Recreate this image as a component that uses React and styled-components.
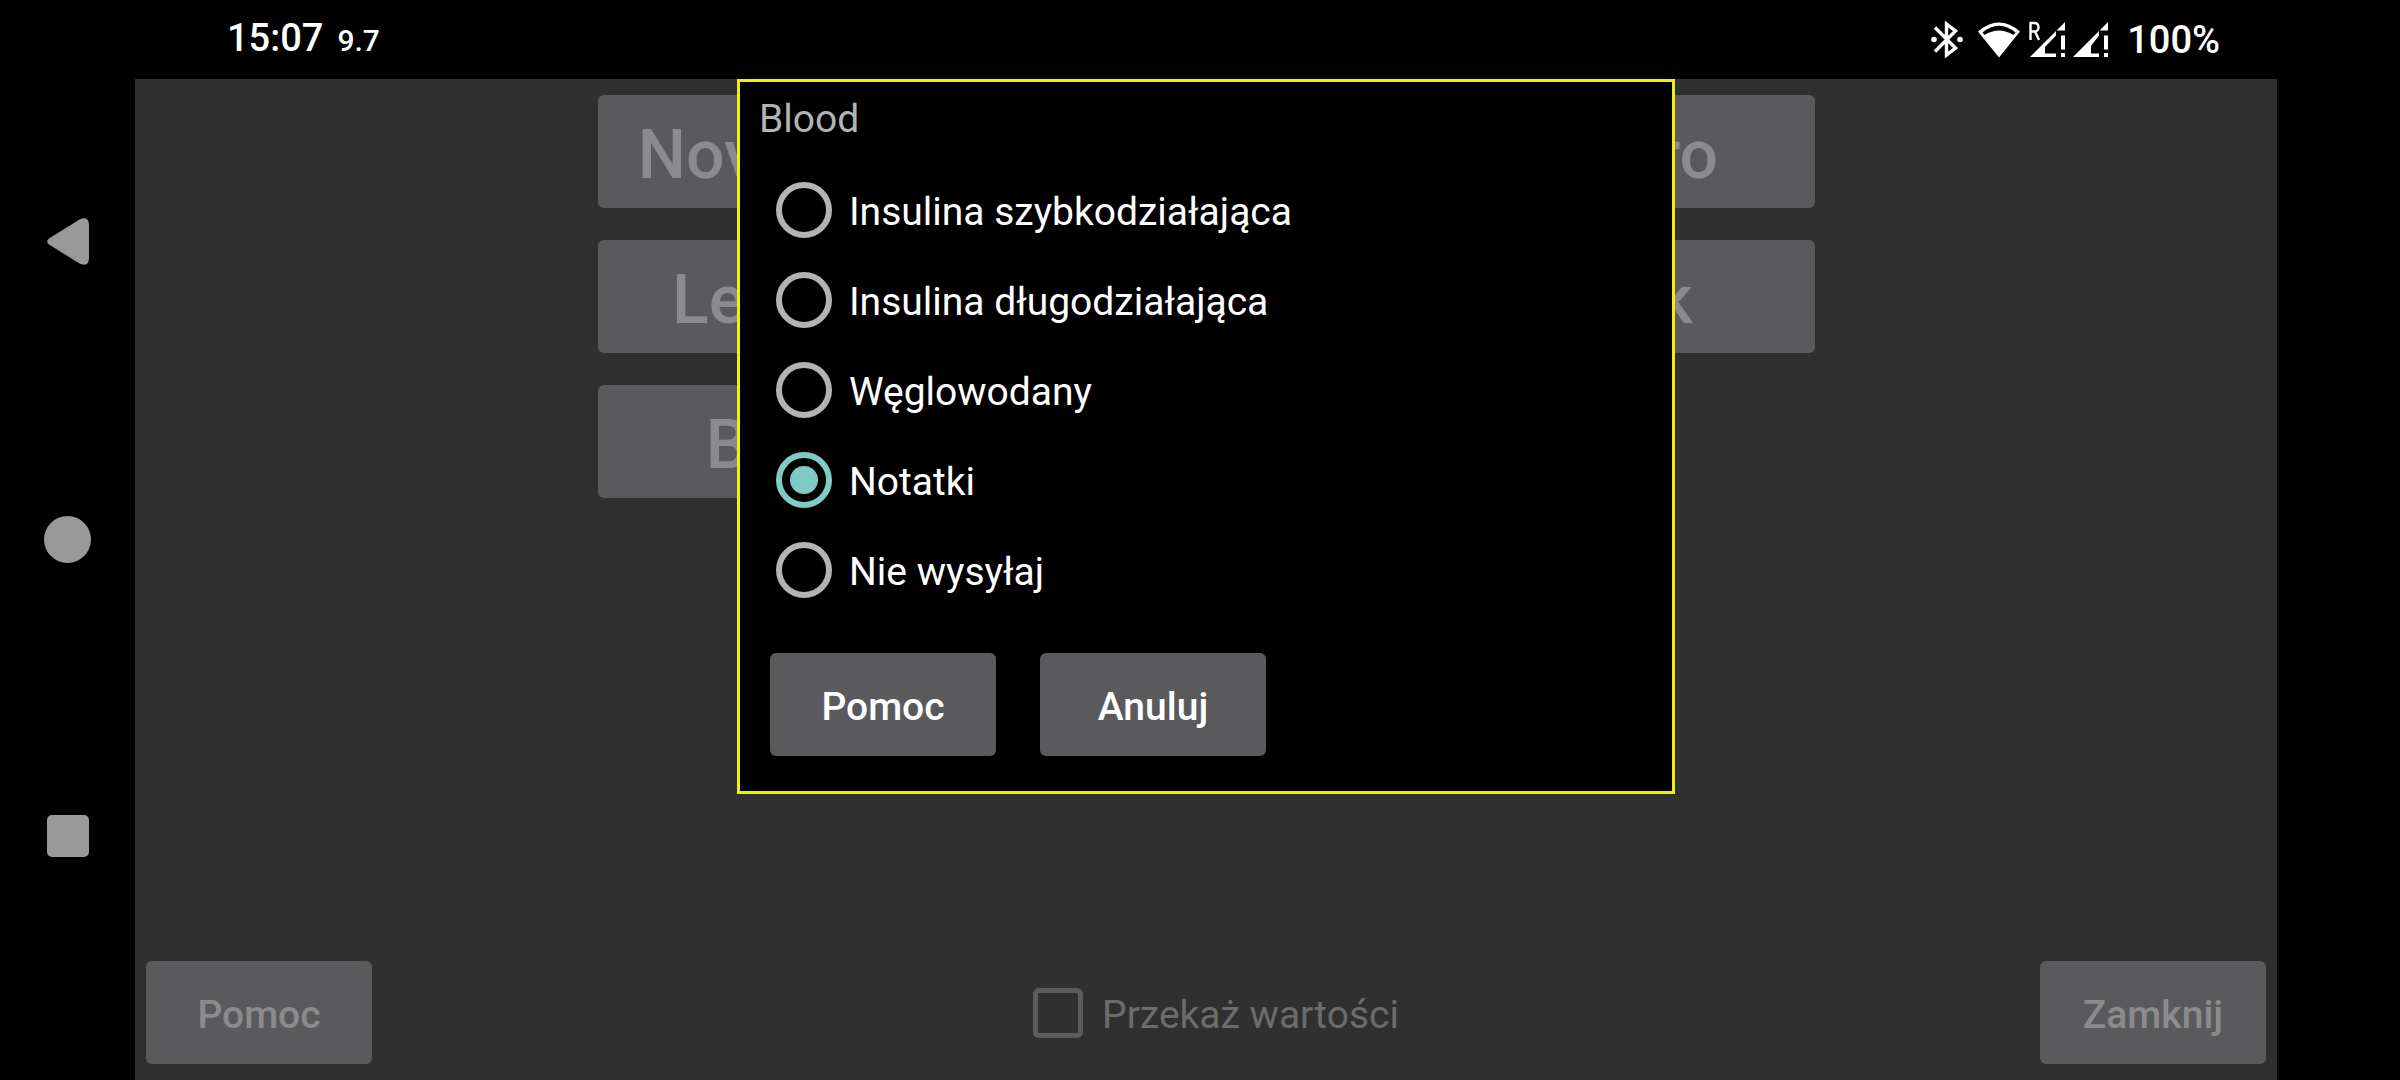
import React, { useState } from "react";
import styled, { createGlobalStyle } from "styled-components";

const Global = createGlobalStyle`
  *, *::before, *::after { box-sizing: border-box; }
  html, body, #root { height: 100%; }
  body {
    margin: 0;
    background: #000;
    color: #fff;
    font-family: Roboto, "Noto Sans", sans-serif;
    font-size: 39px;
    line-height: 48px;
  }
  button, input { font: inherit; color: inherit; margin: 0; }
`;

const Screen = styled.div`
  min-height: 100%;
  display: grid;
  grid-template-rows: 79px 1fr;
`;

const StatusBar = styled.header`
  display: flex;
  align-items: center;
  justify-content: space-between;
  padding: 0 180px 0 227px;
  font-size: 38px;
  font-weight: 500;
`;

const Clock = styled.div`
  display: flex;
  align-items: baseline;
  gap: 14px;
`;

const Glucose = styled.span`
  font-size: 30px;
`;

const Indicators = styled.div`
  display: flex;
  align-items: center;
  gap: 6px;
`;

const Battery = styled.span`
  margin-left: 12px;
`;

const Body = styled.div`
  display: grid;
  grid-template-columns: 135px 1fr 123px;
`;

const NavBar = styled.nav`
  display: flex;
  flex-direction: column;
  justify-content: space-around;
  align-items: center;
  padding: 13px 0 97px;
`;

const NavButton = styled.button`
  display: flex;
  padding: 0;
  border: 0;
  background: none;
  svg { display: block; fill: #999; }
`;

const Main = styled.main`
  position: relative;
  display: flex;
  flex-direction: column;
  justify-content: space-between;
  align-items: center;
  padding: 16px 11px;
  background: #303030;
`;

const LabelGrid = styled.div`
  display: grid;
  grid-template-columns: 392px 369px 392px;
  gap: 32px;
`;

const Button = styled.button`
  min-width: 226px;
  height: 103px;
  padding: 5px 16px 0;
  border: 0;
  border-radius: 6px;
  background: #5a5a5c;
  color: ${(p) => (p.$dim ? "#8b8b8d" : "#fff")};
  font-weight: 500;
`;

const LabelButton = styled(Button)`
  grid-column: ${(p) => p.$column};
  height: 113px;
  padding-top: 6px;
  font-size: 68px;
  line-height: 80px;
`;

const Footer = styled.footer`
  align-self: stretch;
  display: flex;
  justify-content: space-between;
  align-items: center;
`;

const CheckLabel = styled.label`
  display: flex;
  align-items: center;
  gap: 19px;
  padding-left: 20px;
  color: #6c6c6c;
`;

const CheckBox = styled.input`
  appearance: none;
  width: 50px;
  height: 50px;
  border: 5px solid #5c5c5c;
  border-radius: 6px;
`;

const Dialog = styled.section`
  position: absolute;
  top: 0;
  left: 50%;
  width: 938px;
  transform: translateX(-50%);
  padding: 13px 30px 35px;
  border: 3px solid #eeee14;
  background: #000;
`;

const Title = styled.h1`
  margin: 0 0 22px -11px;
  color: #b3b3b3;
  font-size: 39px;
  font-weight: 400;
  line-height: 48px;
`;

const Options = styled.div`
  display: flex;
  flex-direction: column;
  padding-left: 6px;
`;

const Option = styled.label`
  display: flex;
  align-items: center;
  gap: 17px;
  height: 90px;
`;

const ControlText = styled.span`
  padding-top: 4px;
`;

const Radio = styled.input`
  appearance: none;
  display: grid;
  place-items: center;
  width: 56px;
  height: 56px;
  border: 6px solid #b3b3b3;
  border-radius: 50%;
  &:checked { border-color: #80cbc4; }
  &:checked::before {
    content: "";
    width: 28px;
    height: 28px;
    border-radius: 50%;
    background: #80cbc4;
  }
`;

const Actions = styled.div`
  display: flex;
  gap: 44px;
  margin-top: 38px;
`;

const BluetoothIcon = () => (
  <svg width="41" height="37" viewBox="0 0 41 37" aria-hidden="true">
    <path d="M4 6.500 L24.500 27 L15.500 34 V3 L24.500 10 L4 30.500" fill="none" stroke="#fff" strokeWidth="3.400" />
    <circle cx="3" cy="18.500" r="2.800" fill="#fff" />
    <circle cx="29" cy="18.500" r="2.800" fill="#fff" />
  </svg>
);

const WifiIcon = () => (
  <svg width="45" height="36" viewBox="0 0 45 36" aria-hidden="true">
    <path d="M0 9.500 Q21 -8.500 42 9.500 L21 35.500 Z" fill="#fff" />
    <path d="M4.500 10.500 Q21 -3 37.500 10.500 L35.500 13 Q21 4 6.500 13 Z" fill="#000" />
  </svg>
);

const SignalIcon = ({ roaming }) => (
  <svg width="37" height="37" viewBox="0 0 37 37" aria-hidden="true">
    <path
      d={
        (roaming ? "M1 36 L27 10 V14.500 L16 26 V32.500 H27 V36 Z" : "M1 36 L27 10 V14.500 L19 25 V32.500 H27 V36 Z") +
        " M36 1 V9.500 H27.500 Z M32 14.500 h4 v14 h-4 Z M32 32 h4 v4 h-4 Z"
      }
      fill="#fff"
    />
    {roaming && (
      <path d="M1.500 19 V2 H5.500 Q9.500 2 9.500 6.200 Q9.500 10.500 5.500 10.500 H1.500 M6 10.500 L10 19" fill="none" stroke="#fff" strokeWidth="2.400" />
    )}
  </svg>
);

const LABELS = [
  { name: "Novorapid", column: 1 },
  { name: "Dextro", column: 3 },
  { name: "Levemir", column: 1 },
  { name: "Walk", column: 3 },
  { name: "Blood", column: 1 },
];

const OPTIONS = [
  "Insulina szybkodziałająca",
  "Insulina długodziałająca",
  "Węglowodany",
  "Notatki",
  "Nie wysyłaj",
];

export default function App() {
  const [choice, setChoice] = useState("Notatki");
  return (
    <Screen>
      <Global />
      <StatusBar>
        <Clock>
          <span>15:07</span>
          <Glucose>9.7</Glucose>
        </Clock>
        <Indicators>
          <BluetoothIcon />
          <WifiIcon />
          <SignalIcon roaming />
          <SignalIcon />
          <Battery>100%</Battery>
        </Indicators>
      </StatusBar>
      <Body>
        <NavBar>
          <NavButton aria-label="Wstecz">
            <svg width="42" height="47" viewBox="0 0 42 47">
              <path d="M2 20.500 L33 1.200 Q42 -2 42 7 V40 Q42 49 33 45.800 L2 26.500 Q-1.500 23.500 2 20.500 Z" />
            </svg>
          </NavButton>
          <NavButton aria-label="Ekran główny">
            <svg width="47" height="47" viewBox="0 0 47 47"><circle cx="23.500" cy="23.500" r="23.500" /></svg>
          </NavButton>
          <NavButton aria-label="Ostatnie">
            <svg width="42" height="42" viewBox="0 0 42 42"><rect width="42" height="42" rx="5" /></svg>
          </NavButton>
        </NavBar>
        <Main>
          <LabelGrid>
            {LABELS.map(({ name, column }) => (
              <LabelButton key={name} $dim $column={column}>{name}</LabelButton>
            ))}
          </LabelGrid>
          <Footer>
            <Button $dim>Pomoc</Button>
            <CheckLabel>
              <CheckBox type="checkbox" />
              <ControlText>Przekaż wartości</ControlText>
            </CheckLabel>
            <Button $dim>Zamknij</Button>
          </Footer>
          <Dialog role="dialog" aria-labelledby="dialog-title">
            <Title id="dialog-title">Blood</Title>
            <Options>
              {OPTIONS.map((name) => (
                <Option key={name}>
                  <Radio type="radio" name="kind" checked={choice === name} onChange={() => setChoice(name)} />
                  <ControlText>{name}</ControlText>
                </Option>
              ))}
            </Options>
            <Actions>
              <Button>Pomoc</Button>
              <Button>Anuluj</Button>
            </Actions>
          </Dialog>
        </Main>
      </Body>
    </Screen>
  );
}
